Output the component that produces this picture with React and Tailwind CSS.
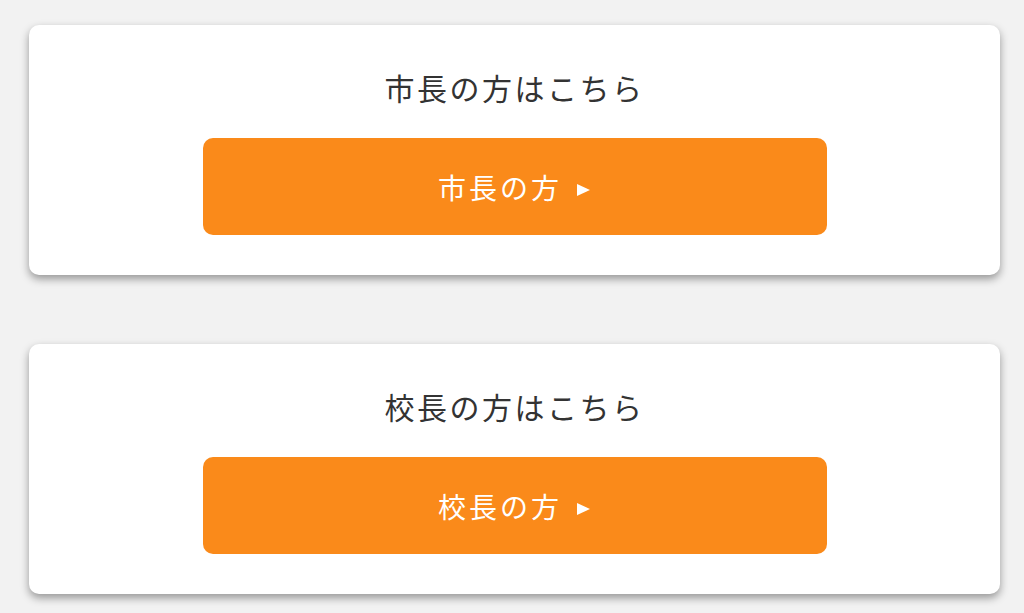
import React from 'react';

const items = [
  { title: '市長の方はこちら', label: '市長の方' },
  { title: '校長の方はこちら', label: '校長の方' },
];

export default function App() {
  return (
    <div className="min-h-[613px] bg-[#f2f2f2] pt-[25px] pl-[29px] pr-[24px]">
      <div className="flex flex-col gap-[69px]">
        {items.map((it) => (
          <div
            key={it.label}
            className="h-[250px] bg-white rounded-[10px] shadow-[0_4px_8px_rgba(0,0,0,0.38)] flex flex-col items-center pt-[40px]"
          >
            <h2 className="text-[30px] leading-[45px] tracking-[2.5px] text-[#333] font-normal [font-family:'Noto_Sans_CJK_JP',sans-serif]">
              {it.title}
            </h2>
            <button className="mt-[28px] w-[624px] h-[97px] rounded-[10px] bg-[#fa8a1a] text-white flex items-center justify-center [font-family:'Noto_Sans_CJK_JP',sans-serif]">
              <span className="text-[28px] tracking-[3px] leading-none">{it.label}</span>
              <svg className="ml-[14px] mt-[6px] shrink-0" width="15" height="12" viewBox="0 0 15 12">
                <path d="M1 0 L14 6 L1 12 Z" fill="#fff" />
              </svg>
            </button>
          </div>
        ))}
      </div>
    </div>
  );
}
